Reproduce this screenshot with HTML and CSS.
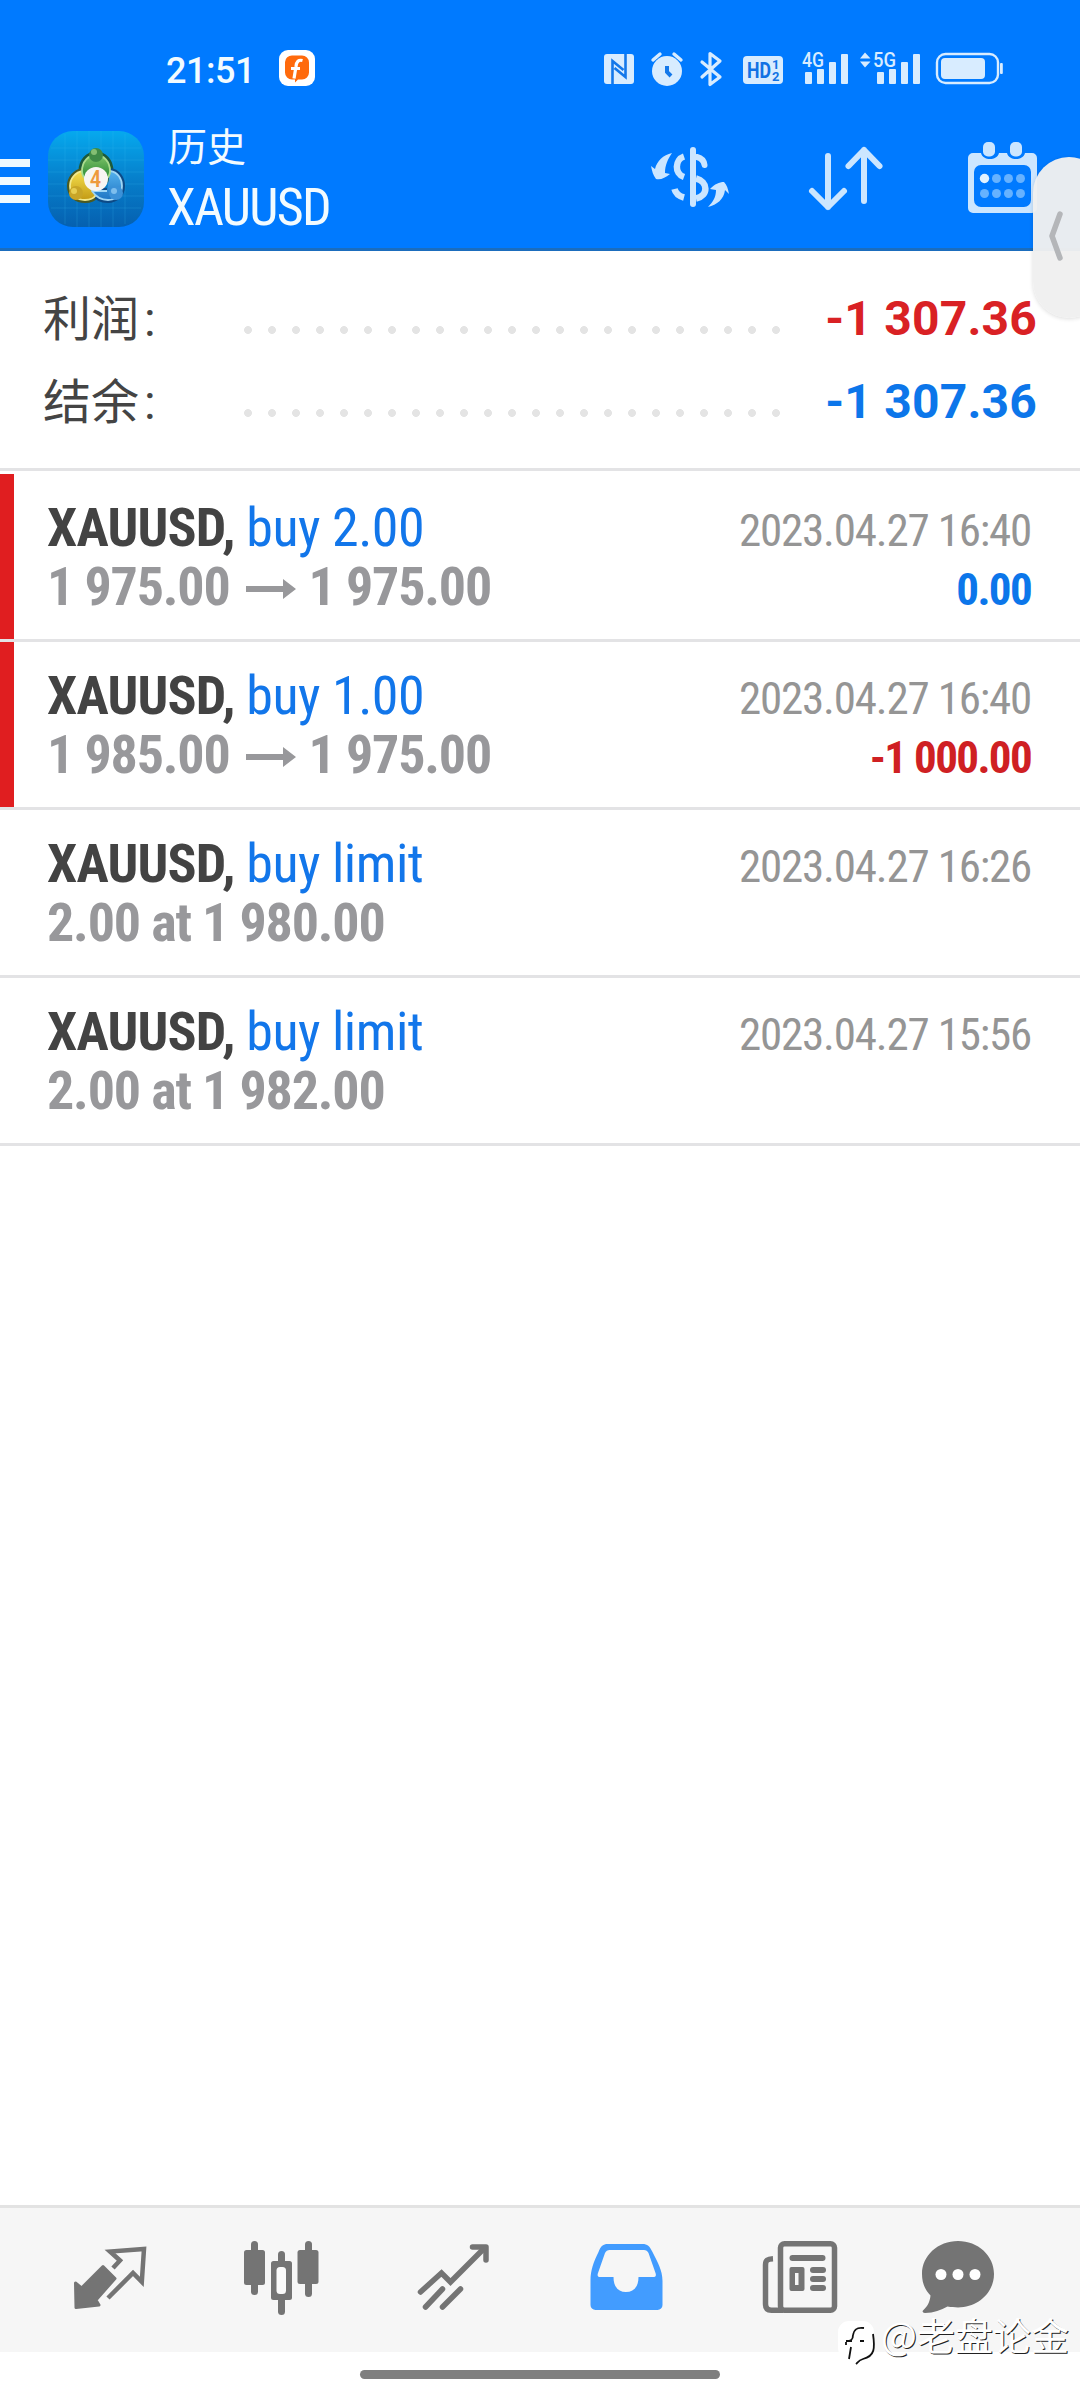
FILE: index.html
```html
<!DOCTYPE html>
<html lang="zh-CN">
<head>
<meta charset="utf-8">
<title>历史 XAUUSD</title>
<link rel="stylesheet" href="styles.css">
</head>
<body>
<div class="screen">
  <header class="top">
    <div class="status">
      <span class="clock">21:51</span>
      <svg class="notice" viewBox="0 0 36 36"><rect width="36" height="36" rx="9" fill="#fff"/><path d="M6 12a7 7 0 0 1 7-6.500h10a7 7 0 0 1 7 7v10a7 7 0 0 1-7 7h-4l-3 3v-3h-3a7 7 0 0 1-7-7z" fill="#ff6a0c"/><path d="M23.500 10.500c-4-1-6 1-6.500 6l-2 12M12 18.500h9" fill="none" stroke="#fff" stroke-width="3.200"/></svg>
      <svg class="system" viewBox="600 42 410 48">
        <g fill="#d8ecff">
          <rect x="604" y="54" width="30" height="30" rx="3"/>
          <path d="M612.500 84V61l11 9M625.500 54v23l-11-9" fill="none" stroke="#1478ea" stroke-width="2.600"/>
          <circle cx="667" cy="71" r="15"/>
          <path d="M653 60l7-6M681 60l-7-6" stroke="#d8ecff" stroke-width="3.400" stroke-linecap="round"/>
          <path d="M667 66v6l4 4" fill="none" stroke="#1478ea" stroke-width="4"/>
          <path d="M702 62l18 15-10 7.500v-31l10 7.500-18 16" fill="none" stroke="#d8ecff" stroke-width="3.200" stroke-linejoin="round" stroke-linecap="round"/>
          <rect x="743" y="56" width="40" height="28" rx="4"/>
          <rect x="805" y="72" width="7" height="12" rx="1"/><rect x="817" y="69" width="7" height="15" rx="1"/><rect x="829" y="62" width="7" height="22" rx="1"/><rect x="841" y="54" width="7" height="30" rx="1"/>
          <rect x="877" y="72" width="7" height="12" rx="1"/><rect x="889" y="69" width="7" height="15" rx="1"/><rect x="901" y="62" width="7" height="22" rx="1"/><rect x="913" y="54" width="7" height="30" rx="1"/>
          <path d="M860 58.500l5-6 5.500 6zM860 61.500h10.500l-5.500 6z"/>
          <rect x="937" y="54" width="61" height="29" rx="8.500" fill="none" stroke="#d8ecff" stroke-width="2.400"/>
          <rect x="941" y="58" width="44" height="21" rx="4"/>
          <rect x="1000" y="63" width="2.800" height="11" rx="1"/>
        </g>
        <text class="hd" x="747" y="78" textLength="24" lengthAdjust="spacingAndGlyphs">HD</text>
        <text class="hd-sub" x="772" y="69">1</text><text class="hd-sub" x="772" y="81">2</text>
        <text class="net" x="802" y="67" textLength="22" lengthAdjust="spacingAndGlyphs">4G</text>
        <text class="net" x="873" y="67" textLength="23" lengthAdjust="spacingAndGlyphs">5G</text>
      </svg>
    </div>
    <div class="toolbar">
      <div class="menu"><i></i><i></i><i></i></div>
      <svg class="logo" viewBox="0 0 96 96">
        <defs>
          <linearGradient id="bg" x1="0" y1="0" x2="0" y2="1"><stop offset="0" stop-color="#06a9ee"/><stop offset=".5" stop-color="#067fcb"/><stop offset="1" stop-color="#0560b0"/></linearGradient>
          <linearGradient id="green" x1="0" y1="0" x2="0" y2="1"><stop offset="0" stop-color="#7fc46a"/><stop offset="1" stop-color="#22842f"/></linearGradient>
          <linearGradient id="gold" x1="0" y1="0" x2="0" y2="1"><stop offset="0" stop-color="#f5e04e"/><stop offset="1" stop-color="#c39a15"/></linearGradient>
          <linearGradient id="sky" x1="0" y1="0" x2="0" y2="1"><stop offset="0" stop-color="#55b2ee"/><stop offset="1" stop-color="#1f76c4"/></linearGradient>
        </defs>
        <rect width="96" height="96" rx="25" fill="url(#bg)"/>
        <path d="M17 3v90M29 0v96M41 0v96M53 0v96M65 0v96M77 3v90M3 17h90M0 29h96M0 41h96M0 53h96M0 65h96M3 77h90" stroke="#3bbcf0" stroke-opacity=".2"/>
        <g stroke-linejoin="round" fill="none">
          <path d="M48 24c-8 0-14 7-14 16 0 4 2 7 5 9l9-11 9 11c3-2 5-5 5-9 0-9-6-16-14-16z" stroke="#1c5a3a" stroke-width="7"/>
          <path d="M35 40c-8 1-13 8-13 15 0 9 7 14 15 14 5 0 9-2 11-5l-9-12" stroke="#4c5a20" stroke-width="6"/>
          <path d="M62 40c8 1 12 8 12 15 0 9-7 14-14 14-7 0-12-3-16-9h15" stroke="#0d4a86" stroke-width="6"/>
          <path d="M35 40c-8 1-13 8-13 15 0 9 7 14 15 14 5 0 9-2 11-5l-9-12" fill="url(#gold)" stroke="#f2e98d" stroke-width="1.800"/>
          <path d="M62 40c8 1 12 8 12 15 0 9-7 14-14 14-7 0-12-3-16-9h15" fill="url(#sky)" stroke="#9fd6f5" stroke-width="1.800"/>
          <path d="M48 24c-8 0-14 7-14 16 0 4 2 7 5 9l9-11 9 11c3-2 5-5 5-9 0-9-6-16-14-16z" fill="url(#green)" stroke="#a9dc8d" stroke-width="1.800"/>
        </g>
        <circle cx="48" cy="24" r="7" fill="#3f8a46"/><circle cx="46" cy="21" r="3" fill="#a2d486" opacity=".7"/>
        <circle cx="28" cy="62" r="7" fill="#c8a527"/><circle cx="26" cy="60" r="3" fill="#f3df65" opacity=".7"/>
        <circle cx="68" cy="62" r="7" fill="#3b91d8"/><circle cx="66" cy="60" r="3" fill="#9ad2f6" opacity=".7"/>
        <circle cx="48" cy="48" r="12" fill="#f7f5f2"/>
        <text class="four" x="47.500" y="56" text-anchor="middle">4</text>
      </svg>
      <div class="title"><span class="page">历史</span><span class="symbol">XAUUSD</span></div>
      <svg class="actions" viewBox="640 135 400 85">
        <g fill="none" stroke="#cce6ff" stroke-width="6" stroke-linecap="round" stroke-linejoin="round">
          <path d="M693 150v54"/>
          <path d="M684 156.500c-9 3-10 17 0 20.500" stroke-linecap="butt" stroke-width="6.500"/>
          <path d="M697 157c4 1 7 4 7.500 8" stroke-width="6"/>
          <path d="M696 178.500c12 3 13 17 0 20" stroke-linecap="butt" stroke-width="6.500"/>
          <path d="M674.500 189c1 4 4 7 9.500 8.500" stroke-width="6.500" stroke-linecap="butt"/>
          <path d="M828 156v51M812 191l16 16 16-16M864 201v-51M848.500 166l15.500-16 15.500 16"/>
        </g>
        <g fill="#cce6ff">
          <path d="M672 153c-9 2-15 8-17 16l-4-3c1 5 2 9 5 13 5 1 9-1 14-5l-5-1c0-8 3-14 7-20z"/>
          <path d="M708 207c9-2 16-8 17-17l4 4c-1-5-2-9-5-12-5 0-9 2-14 7l6 1c0 7-3 12-8 17z"/>
          <path fill-rule="evenodd" d="M973 153h8c2 8 16 8 18 0h8c2 8 16 8 18 0h7a5 5 0 0 1 5 5v50a5 5 0 0 1-5 5h-59a5 5 0 0 1-5-5v-50a5 5 0 0 1 5-5zM981 165a7 7 0 0 0-7 7v28a7 7 0 0 0 7 7h43a7 7 0 0 0 7-7v-28a7 7 0 0 0-7-7z"/>
          <rect x="983" y="142" width="12" height="14.500" rx="5"/><rect x="1010" y="142" width="12" height="14.500" rx="5"/>
          <circle cx="984.500" cy="178.500" r="4.700" fill="#e2f2ff"/>
        </g>
        <g fill="#66b2ff"><circle cx="996.500" cy="178.500" r="4.500"/><circle cx="1008.500" cy="178.500" r="4.500"/><circle cx="1020.500" cy="178.500" r="4.500"/><circle cx="984.500" cy="193.500" r="4.500"/><circle cx="996.500" cy="193.500" r="4.500"/><circle cx="1008.500" cy="193.500" r="4.500"/><circle cx="1020.500" cy="193.500" r="4.500"/></g>
      </svg>
    </div>
  </header>

  <section class="summary">
    <div class="sum"><span class="label">利润<i>:</i></span><span class="dots"></span><span class="value loss">-1 307.36</span></div>
    <div class="sum"><span class="label">结余<i>:</i></span><span class="dots"></span><span class="value gain">-1 307.36</span></div>
  </section>

  <main class="trades">
    <article class="trade closed">
      <div class="info">
        <div class="line"><b>XAUUSD, </b><span class="side">buy 2.00</span></div>
        <div class="line price"><b>1 975.00</b><svg class="arrow" viewBox="0 0 50 20"><path d="M0 7h37V0l13 10-13 10v-7H0z"/></svg><b>1 975.00</b></div>
      </div>
      <div class="meta"><span>2023.04.27 16:40</span><b class="gain">0.00</b></div>
    </article>
    <article class="trade closed">
      <div class="info">
        <div class="line"><b>XAUUSD, </b><span class="side">buy 1.00</span></div>
        <div class="line price"><b>1 985.00</b><svg class="arrow" viewBox="0 0 50 20"><path d="M0 7h37V0l13 10-13 10v-7H0z"/></svg><b>1 975.00</b></div>
      </div>
      <div class="meta"><span>2023.04.27 16:40</span><b class="loss">-1 000.00</b></div>
    </article>
    <article class="trade">
      <div class="info">
        <div class="line"><b>XAUUSD, </b><span class="side">buy limit</span></div>
        <div class="line price"><b>2.00 at 1 980.00</b></div>
      </div>
      <div class="meta"><span>2023.04.27 16:26</span></div>
    </article>
    <article class="trade">
      <div class="info">
        <div class="line"><b>XAUUSD, </b><span class="side">buy limit</span></div>
        <div class="line price"><b>2.00 at 1 982.00</b></div>
      </div>
      <div class="meta"><span>2023.04.27 15:56</span></div>
    </article>
  </main>

  <nav class="tabs">
    <svg viewBox="0 0 78 76"><path fill="#747474" stroke="#747474" stroke-width="3" stroke-linejoin="round" d="M4.500 43l6 5L32 26.500l12 12L25 60l3 5L5 67.500z"/><path fill="none" stroke="#747474" stroke-width="4.500" stroke-linejoin="miter" d="M42 28l7-7.500-10-9 34-2.600-2.200 33L62 33 37 58"/></svg>
    <svg viewBox="2 0 78 76"><g fill="#747474"><rect x="2" y="10" width="21" height="35" rx="2.500"/><rect x="9" y="1" width="7" height="54" rx="3.500"/><rect x="55.500" y="10" width="21" height="34" rx="2.500"/><rect x="63" y="1" width="7" height="56" rx="3.500"/><rect x="29" y="21" width="21" height="39" rx="2.500"/><rect x="36" y="11" width="7" height="64" rx="3.500"/><rect x="34.500" y="27" width="9.500" height="27" rx="3.500" fill="#fafafa"/></g></svg>
    <svg viewBox="1.500 0 78 76"><path fill="none" stroke="#747474" stroke-width="5.500" stroke-linecap="round" d="M6 52l21-19 9 9 34-34M11 67l17-18M28 67l18-18"/><path fill="none" stroke="#747474" stroke-width="5.500" stroke-linecap="round" stroke-linejoin="round" d="M58 7h13.500v13"/></svg>
    <svg viewBox="1.500 0 78 76"><path fill="#429cff" fill-rule="evenodd" d="M20 4h35c5 0 7 2 10 8 5 10 10 18 10 29v24a5 5 0 0 1-5 5H8a5 5 0 0 1-5-5V41c0-11 3-19 8-29 2-6 5-8 9-8zm2 6c-2 0-3.500 1-4.500 3L10.500 33c-1 3 0 4 2 4H26c0 10 5 15 12.500 15S51 47 51 37h14c3 0 4-1 3-4l-7-20c-1-2-2.500-3-4.500-3z"/></svg>
    <svg viewBox="0.500 0 78 76"><g fill="none" stroke="#747474" stroke-width="5.500"><rect x="19" y="3.700" width="54" height="66.600" rx="4"/><path d="M11.500 18.700C6 19 4 20 4 25v39c0 4 2 6.300 6 6.300h12"/></g><g fill="#747474"><rect x="28" y="15" width="36" height="6" rx="3"/><path fill-rule="evenodd" d="M30 27h11a2 2 0 0 1 2 2v20a2 2 0 0 1-2 2H30a2 2 0 0 1-2-2V29a2 2 0 0 1 2-2zm3.500 6v12h3.500V33z"/><rect x="48.500" y="27" width="16" height="6" rx="3"/><rect x="48.500" y="36" width="16" height="6" rx="3"/><rect x="48.500" y="45" width="16" height="6" rx="3"/></g></svg>
    <svg viewBox="0 0 78 76"><path fill="#747474" d="M39 1C19 1 3 15.500 3 34c0 9 3 16 8.500 21.500C11 62 8 67 4 70.500c-1 1.500 0 2.500 2 2.500 9 0 16-3 22.500-6.500 4 .8 7 .9 10.500.9 20 0 36-14.900 36-33.400S59 1 39 1z"/><g fill="#fff"><circle cx="22" cy="34.500" r="5.500"/><circle cx="39" cy="34.500" r="5.500"/><circle cx="56" cy="34.500" r="5.500"/></g></svg>
  </nav>
  <footer class="gesture"><i></i></footer>

  <div class="handle"><svg viewBox="0 0 16 50"><path d="M12 3L4 25l8 22" fill="none" stroke="#b4b6b9" stroke-width="5.500" stroke-linecap="round" stroke-linejoin="round"/></svg></div>
  <div class="watermark">
    <svg viewBox="0 0 40 46"><path d="M12 1h14a11 11 0 0 1 11 11v15c0 8-5 11-11 12l-7 5v-5h-7A11 11 0 0 1 1 28V12A11 11 0 0 1 12 1z" fill="#fff"/><path d="M9 21h6M27 8c-7-1-10 1-11 7M9 22l0 3M16 15c0 5-2 6-7 6M14 27l-2 12M23 21h4M36 14c2 14 2 22-10 25-4 1-5 3-7 5" fill="none" stroke="#111" stroke-width="1.800"/></svg>
    <span>@老盘论金</span>
  </div>
</div>
</body>
</html>
```
FILE: styles.css
```css
* { box-sizing: border-box; }
body { margin: 0; background: #fff; }
.screen {
  position: relative;
  display: flex;
  flex-direction: column;
  width: 1080px;
  height: 2400px;
  overflow: hidden;
  background: #fff;
  font-family: Roboto, "Noto Sans CJK SC", sans-serif;
}
.top { height: 251px; background: #007aff; border-bottom: 3px solid #1b6dbd; color: #f2fbff; }

.status { display: flex; align-items: flex-start; height: 131px; padding: 50px 0 0 166px; }
.clock { width: 113px; font-size: 36px; font-weight: 500; line-height: 42px; letter-spacing: -.5px; }
.notice { width: 36px; height: 36px; }
.system { width: 410px; height: 48px; margin: -8px 0 0 285px; overflow: visible; }
.hd { font: 700 22px Roboto, sans-serif; fill: #1272e4; }
.hd-sub { font: 700 13px Roboto, sans-serif; fill: #1272e4; }
.net { font: 500 20px Roboto, sans-serif; fill: #d8ecff; }

.toolbar { display: flex; align-items: flex-start; }
.menu { display: flex; flex-direction: column; gap: 10px; width: 48px; padding-top: 28px; }
.menu i { width: 30px; height: 8px; background: #f0faff; }
.logo { width: 96px; height: 96px; }
.four { font: 500 23px Roboto, sans-serif; font-stretch: 75%; fill: #ee9a3c; }
.title { display: flex; flex-direction: column; width: 496px; padding-left: 24px; }
.page { margin-top: -11px; font-size: 39px; line-height: 48px; font-family: "Noto Sans CJK SC", sans-serif; }
.symbol { font-size: 52px; line-height: 60px; margin: 10px 0 0 -1px; font-stretch: 75%; font-weight: 450; letter-spacing: -1.700px; }
.actions { width: 400px; height: 85px; margin-top: 4px; }

.summary { height: 220px; padding: 26px 43px 0 43px; border-bottom: 3px solid #e3e3e5; }
.sum { display: flex; align-items: center; height: 83px; }
.label { width: 201px; padding-top: 2px; font-size: 48px; line-height: 81px; color: #444; }
.label i { margin-left: 5px; font-style: normal; }
.dots { width: 536px; height: 8px; margin-top: 23px; background: radial-gradient(circle at 4px 4px, #e4e4e4 3.600px, transparent 4.200px) 0 0 / 24px 8px repeat-x; }
.value { flex: 1; text-align: right; font-size: 48px; font-weight: 700; line-height: 83px; letter-spacing: .2px; white-space: nowrap; }
.loss { color: #d92124; }
.gain { color: #0c76ea; }

.trades { flex: 1; padding-top: 3px; font-stretch: 75%; }
.trade { display: flex; justify-content: space-between; height: 168px; padding: 24px 49px 0 47px; border-bottom: 3px solid #e3e3e5; }
.trade b, .trade span { white-space: pre; }
.closed { background: linear-gradient(#e01e20, #e01e20) 0 0 / 14px 165px no-repeat; }
.line { display: flex; align-items: center; height: 59px; font-size: 54px; line-height: 59px; color: #434343; letter-spacing: -.8px; }
.line.price { color: #98989b; letter-spacing: -1.170px; }
.side { color: #1276ea; letter-spacing: -.5px; font-weight: 450; }
.arrow { width: 50px; height: 20px; margin: 4px 13px 0 16px; fill: #98989b; }
.meta { display: flex; flex-direction: column; align-items: flex-end; padding-top: 3px; font-size: 45px; line-height: 59px; color: #959595; letter-spacing: -1.200px; }
.meta b { letter-spacing: -1.650px; }
.meta .loss { color: #cf2023; }
.meta .gain { color: #0c76ea; }

.tabs { display: grid; grid-template-columns: repeat(5, 172.600px) 143px; justify-items: center; height: 147px; padding: 32px 0 0 24px; border-top: 3px solid #e3e3e3; background: #f6f6f6; }
.tabs svg { width: 78px; height: 76px; }
.gesture { display: flex; justify-content: center; height: 48px; padding-top: 18px; }
.gesture i { width: 360px; height: 9px; border-radius: 5px; background: #7f7f7f; }

.handle { position: absolute; left: 1033px; top: 157px; display: flex; align-items: center; width: 72px; height: 161px; padding: 0 0 4px 15px; border-radius: 36px; background: rgba(240, 240, 240, .97); box-shadow: 0 1px 4px rgba(0, 0, 0, .14); }
.handle svg { width: 16px; height: 50px; }
.watermark { position: absolute; left: 837px; top: 2320px; display: flex; align-items: flex-start; gap: 4px; color: #fff; font: 38px/40px "Noto Sans CJK SC", sans-serif; text-shadow: 1px 1px 0 #222; }
.watermark span { margin-top: -6px; }
.watermark svg { width: 40px; height: 46px; }
```
